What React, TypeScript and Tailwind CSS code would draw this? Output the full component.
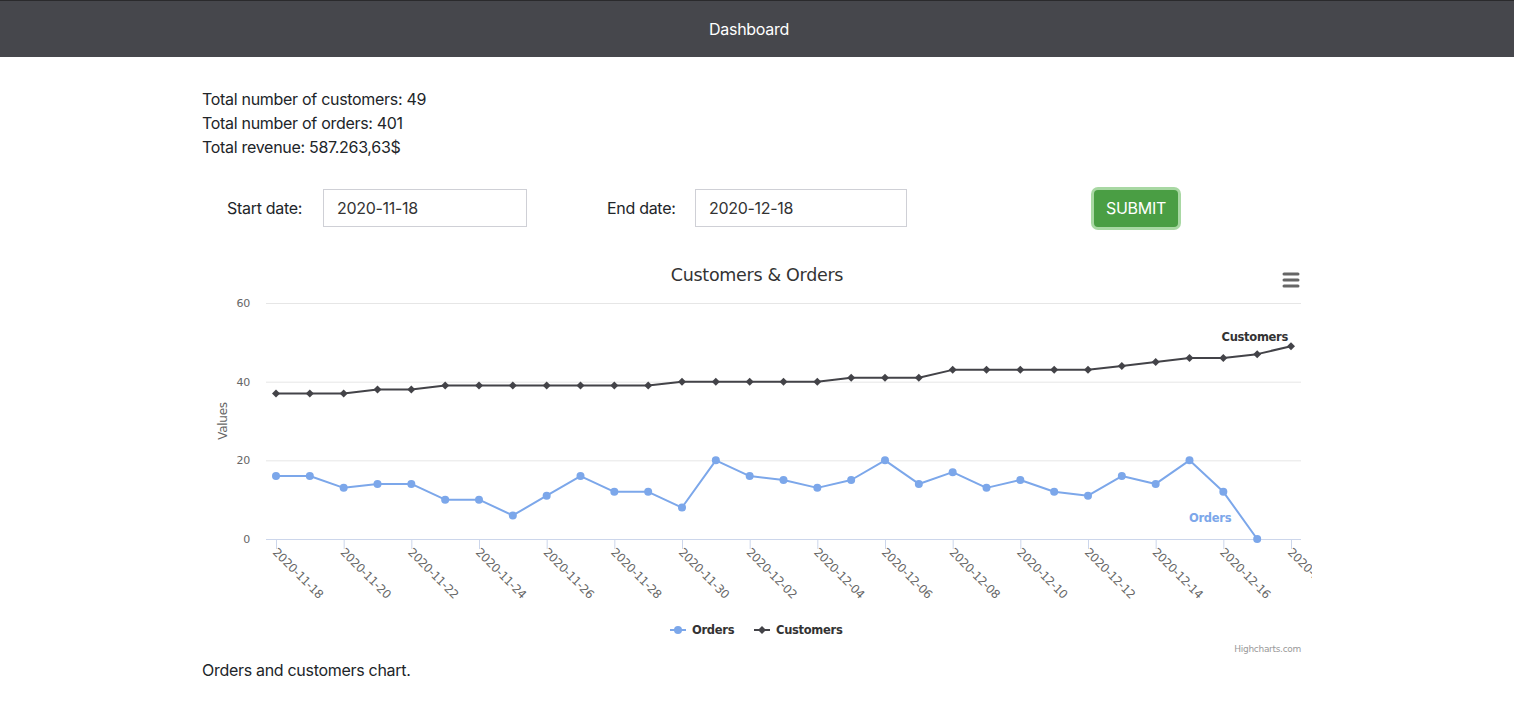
const orders = [16, 16, 13, 14, 14, 10, 10, 6, 11, 16, 12, 12, 8, 20, 16, 15, 13, 15, 20, 14, 17, 13, 15, 12, 11, 16, 14, 20, 12, 0];
const customers = [37, 37, 37, 38, 38, 39, 39, 39, 39, 39, 39, 39, 40, 40, 40, 40, 40, 41, 41, 41, 43, 43, 43, 43, 43, 44, 45, 46, 46, 47, 49];

const days = Array.from({ length: 31 }, (_, i) => {
    const d = new Date(Date.UTC(2020, 10, 18 + i));
    return d.toISOString().slice(0, 10);
});

// plot area inside the svg
const LEFT = 64;
const RIGHT = 1099;
const BOTTOM = 289;
const STEP = (1089 - 74) / 30;
const px = (i: number) => 74 + i * STEP;
const py = (v: number) => BOTTOM - (v * 236) / 60;

const BLUE = "#7ca7ea";
const DARK = "#434348";
const chartFont = "'DejaVu Sans', 'Lucida Grande', sans-serif";

function Chart() {
    const orderPath = orders.map((v, i) => `${i ? "L" : "M"}${px(i)},${py(v)}`).join(" ");
    const custPath = customers.map((v, i) => `${i ? "L" : "M"}${px(i)},${py(v)}`).join(" ");

    return (
        <svg width={1110} height={408} className="block" style={{ fontFamily: chartFont }}>
            {/* title + menu */}
            <text x={555} y={31} textAnchor="middle" fontSize={17.5} fill="#333">
                Customers &amp; Orders
            </text>
            <g stroke="#666" strokeWidth={3} strokeLinecap="round">
                <line x1={1082} y1={24} x2={1096} y2={24} />
                <line x1={1082} y1={30} x2={1096} y2={30} />
                <line x1={1082} y1={36} x2={1096} y2={36} />
            </g>

            {/* grid */}
            {[60, 40, 20].map((v) => (
                <line key={v} x1={LEFT} x2={RIGHT} y1={py(v) + 0.5} y2={py(v) + 0.5} stroke="#e6e6e6" />
            ))}
            <line x1={LEFT} x2={RIGHT} y1={BOTTOM + 0.5} y2={BOTTOM + 0.5} stroke="#ccd6eb" />
            {[60, 40, 20, 0].map((v) => (
                <text key={v} x={48} y={py(v) + 4} textAnchor="end" fontSize={11} fill="#666">
                    {v}
                </text>
            ))}
            <text x={25} y={171} transform="rotate(-90 25 171)" textAnchor="middle" fontSize={12} fill="#666">
                Values
            </text>

            {/* x ticks + labels */}
            {days.map((d, i) =>
                i % 2 === 0 ? (
                    <g key={d}>
                        <line x1={px(i) + 0.5} x2={px(i) + 0.5} y1={BOTTOM} y2={BOTTOM + 10} stroke="#ccd6eb" />
                        <text
                            x={px(i) - 4}
                            y={BOTTOM + 14}
                            transform={`rotate(45 ${px(i) - 4} ${BOTTOM + 14})`}
                            fontSize={11.8}
                            fill="#666"
                        >
                            {d}
                        </text>
                    </g>
                ) : null
            )}

            {/* series */}
            <path d={orderPath} fill="none" stroke={BLUE} strokeWidth={2} strokeLinejoin="round" />
            {orders.map((v, i) => (
                <circle key={i} cx={px(i)} cy={py(v)} r={4} fill={BLUE} />
            ))}
            <path d={custPath} fill="none" stroke={DARK} strokeWidth={2} strokeLinejoin="round" />
            {customers.map((v, i) => (
                <path key={i} d={`M${px(i)},${py(v) - 4} L${px(i) + 4},${py(v)} L${px(i)},${py(v) + 4} L${px(i) - 4},${py(v)} Z`} fill={DARK} />
            ))}

            <text x={1086} y={91} textAnchor="end" fontSize={11.5} fontWeight="bold" fill="#333">
                Customers
            </text>
            <text x={987} y={272} fontSize={11.5} fontWeight="bold" fill={BLUE}>
                Orders
            </text>

            {/* legend */}
            <line x1={468} x2={484} y1={380} y2={380} stroke={BLUE} strokeWidth={2} />
            <circle cx={476} cy={380} r={4} fill={BLUE} />
            <text x={490} y={384} fontSize={11.5} fontWeight="bold" fill="#333">
                Orders
            </text>
            <line x1={552} x2={568} y1={380} y2={380} stroke={DARK} strokeWidth={2} />
            <path d="M560,376 L564,380 L560,384 L556,380 Z" fill={DARK} />
            <text x={574} y={384} fontSize={11.5} fontWeight="bold" fill="#333">
                Customers
            </text>

            <text x={1099} y={402} textAnchor="end" fontSize={9} fill="#999">
                Highcharts.com
            </text>
        </svg>
    );
}

export default function App() {
    return (
        <div className="min-h-screen bg-white text-[#212529] font-['Inter',sans-serif] tracking-[-0.3px]">
            <div className="h-[57px] bg-[#46474c] border-t border-[#2a2a2c] flex items-center justify-center pr-[16px] text-white text-base">
                Dashboard
            </div>

            <div className="w-[1140px] mx-auto px-[15px]">
                <div className="mt-[30px] text-base leading-6">
                    <div>Total number of customers: 49</div>
                    <div>Total number of orders: 401</div>
                    <div>Total revenue: 587.263,63$</div>
                </div>

                <div className="mt-[30px] flex items-center h-[38px] text-base">
                    <span className="ml-[25px] w-[96px]">Start date:</span>
                    <input
                        className="w-[204px] h-[38px] border border-[#cfd0d6] px-[13px] text-[#333] outline-none"
                        defaultValue="2020-11-18"
                    />
                    <span className="ml-[80px] w-[88px]">End date:</span>
                    <input
                        className="w-[212px] h-[38px] border border-[#cfd0d6] px-[13px] text-[#333] outline-none"
                        defaultValue="2020-12-18"
                    />
                    <button className="ml-[187px] w-[84px] h-[37px] rounded-[4px] bg-[#4a9e44] text-white ring-[3px] ring-[#a8d8a3]">
                        SUBMIT
                    </button>
                </div>

                <div className="mt-[23px]">
                    <Chart />
                </div>

                <p className="leading-6">Orders and customers chart.</p>
            </div>
        </div>
    );
}
